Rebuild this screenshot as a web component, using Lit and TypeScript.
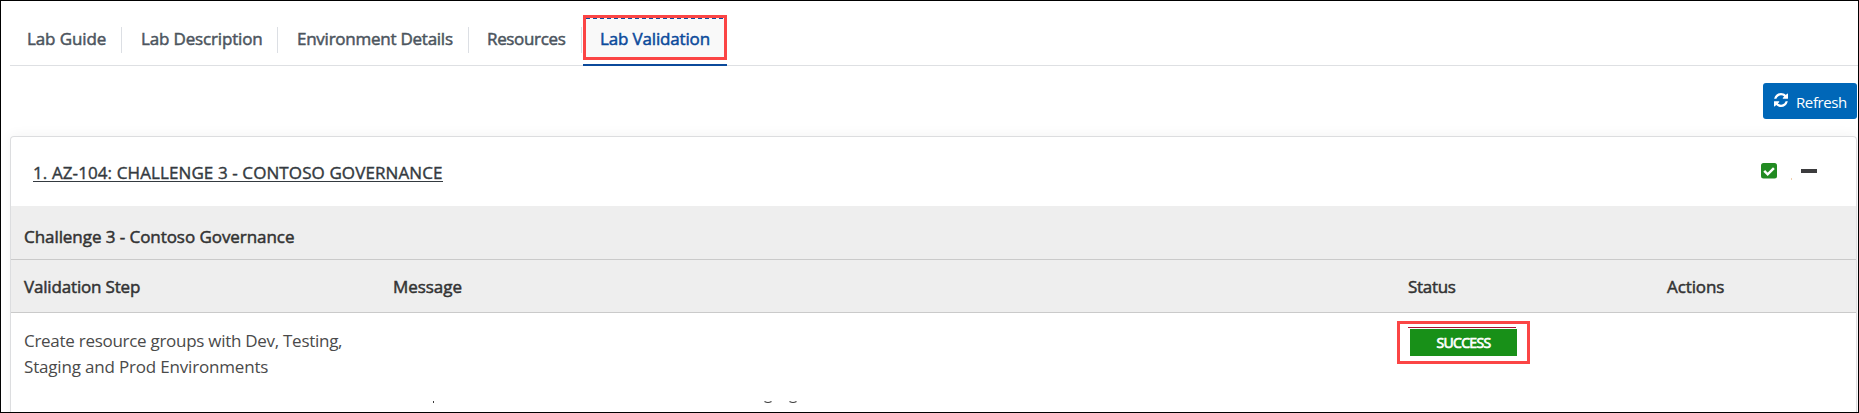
import { LitElement, html, css } from "lit";
import { customElement } from "lit/decorators.js";

@customElement("app-root")
class AppRoot extends LitElement {
  static styles = css`
    :host { display: block; height: 413px; font-family: "Open Sans", "Noto Sans", sans-serif; font-size: 17px; color: #333; }
    * { box-sizing: border-box; }
    .frame { height: 413px; border: 1px solid #000; background: #fff; padding: 13px 0 0 9px; overflow: hidden; }
    .tabs { display: flex; height: 52px; border-bottom: 1px solid #dee0e3; color: #4c555e; -webkit-text-stroke: 0.5px currentColor; }
    .tab { display: flex; height: 26px; margin-top: 13px; line-height: 23px; border-right: 1px solid #dcdfe4; white-space: nowrap; }
    .guide { width: 112px; padding-left: 17px; letter-spacing: -0.1px; }
    .desc { width: 156px; padding-left: 19px; letter-spacing: -0.16px; }
    .env { width: 191px; padding-left: 19px; letter-spacing: -0.25px; }
    .res { width: 113px; padding-left: 18px; letter-spacing: -0.35px; }
    .active { position: relative; width: 144px; height: 52px; margin: 0 0 0 1px; padding: 13px 0 0 17px; border: 0; border-bottom: 2px solid #0b4a9b; color: #0b4a9b; letter-spacing: -0.16px; }
    .mark { border: 3px solid #fb4545; }
    .active .mark { position: absolute; left: 0; top: 1px; width: 144px; height: 45px; z-index: 0; background: repeating-linear-gradient(90deg, #0b4a9b 0 4px, transparent 4px 7px) 0 0 / 100% 1px no-repeat, #f9f9f9; }
    .label { position: relative; z-index: 1; }
    .toolbar { display: flex; justify-content: flex-end; height: 70px; padding: 17px 1px 0 0; }
    .refresh { display: flex; align-items: center; width: 94px; height: 36px; padding: 0 0 0 11px; border: 0; border-radius: 3px; background: #0067b8; color: #fff; font: 400 15px/20px "Open Sans", "Noto Sans", sans-serif; letter-spacing: -0.4px; }
    .refresh svg { width: 14px; height: 14px; margin: -2px 8px 0 0; }
    .refresh span { padding-top: 1px; }
    .card { width: 1847px; height: 290px; border: 1px solid #dcdddf; border-bottom: 0; border-radius: 4px 4px 0 0; box-shadow: 0 -2px 12px rgba(0,0,0,.045); }
    .head { display: flex; height: 69px; padding-left: 22px; color: #343a40; }
    .title { width: 1728px; padding-top: 24px; line-height: 24px; letter-spacing: 0.1px; -webkit-text-stroke: 0.4px currentColor; }
    .title span { border-bottom: 1px solid #343a40; display: inline-block; height: 21px; }
    .check { width: 16px; height: 16px; margin-top: 26px; }
    .speck { width: 1px; height: 2px; margin: 41px 9px 0 14px; background: #f2cfae; }
    .minus { width: 16px; height: 4px; margin-top: 32px; background: #3c3c3e; }
    .bar { background: #eee; border-bottom: 1px solid #cacaca; -webkit-text-stroke: 0.5px currentColor; }
    .group { height: 54px; padding: 19px 0 0 13px; line-height: 24px; letter-spacing: -0.06px; }
    .row { display: grid; grid-template-columns: 369px 1015px 259px 1fr; padding-left: 13px; }
    .cols { height: 53px; padding-top: 15px; line-height: 24px; }
    .c1 { letter-spacing: -0.17px; } .c2 { letter-spacing: -0.05px; } .c3 { letter-spacing: -0.3px; } .c4 { letter-spacing: -0.1px; }
    .step { padding-top: 15px; line-height: 26px; white-space: nowrap; color: #4a4a4a; }
    .l1 { letter-spacing: -0.28px; } .l2 { letter-spacing: -0.18px; }
    .message { padding: 88px 0 0 38px; }
    .message svg { display: block; width: 370px; height: 4px; }
    .status { width: 133px; height: 43px; margin: 8px 0 0 -11px; padding: 3px 0 0 8px; }
    .rule { width: 108px; height: 1px; background: #ae1231; }
    .badge { width: 107px; height: 27px; margin: 1px 0 0 2px; background: #189018; color: #fff; font-size: 14px; line-height: 28px; text-align: center; letter-spacing: -0.7px; -webkit-text-stroke: 0.7px currentColor; }
  `;

  render() {
    return html`<div class="frame">
      <nav class="tabs">
        <div class="tab guide">Lab Guide</div>
        <div class="tab desc">Lab Description</div>
        <div class="tab env">Environment Details</div>
        <div class="tab res">Resources</div>
        <div class="tab active"><div class="mark"></div><span class="label">Lab Validation</span></div>
      </nav>
      <div class="toolbar">
        <button class="refresh">
          <svg viewBox="0 0 1536 1536" fill="#fff"><path d="M1511 928q0 5-1 7-64 268-268 434.500T764 1536q-146 0-282.500-55T238 1324l-129 129q-19 19-45 19t-45-19-19-45V960q0-26 19-45t45-19h448q26 0 45 19t19 45-19 45l-137 137q71 66 161 102t187 36q134 0 250-65t186-179q11-17 53-117 8-23 30-23h192q13 0 22.500 9.500t9.500 22.500zm25-800v448q0 26-19 45t-45 19h-448q-26 0-45-19t-19-45 19-45l138-138Q969 256 768 256q-134 0-250 65T332 500q-11 17-53 117-8 23-30 23H50q-13 0-22.500-9.500T18 608v-7q65-268 270-434.500T768 0q146 0 284 55.500T1297 212l130-129q19-19 45-19t45 19 19 45z"/></svg>
          <span>Refresh</span>
        </button>
      </div>
      <section class="card">
        <div class="head">
          <div class="title"><span>1. AZ-104: CHALLENGE 3 - CONTOSO GOVERNANCE</span></div>
          <svg class="check" viewBox="0 0 16 16"><rect width="16" height="15.500" rx="2.500" fill="#228b22"/><path d="M3.200 7.800l3.500 3.500 6.200-6.200" fill="none" stroke="#fff" stroke-width="2.500"/></svg>
          <div class="speck"></div>
          <div class="minus"></div>
        </div>
        <div class="bar group">Challenge 3 - Contoso Governance</div>
        <div class="bar row cols"><div class="c1">Validation Step</div><div class="c2">Message</div><div class="c3">Status</div><div class="c4">Actions</div></div>
        <div class="row">
          <div class="step"><div class="l1">Create resource groups with Dev, Testing,</div><div class="l2">Staging and Prod Environments</div></div>
          <div class="message"><svg viewBox="0 0 370 4" fill="none" stroke="#3c3c3c"><path d="M2.500 0v2"/><path stroke-width="1.200" d="M333.500 .5q3.500 2 7 0M358.500 .5q3.500 2 7 0"/></svg></div>
          <div class="mark status"><div class="rule"></div><div class="badge">SUCCESS</div></div>
          <div></div>
        </div>
      </section>
    </div>`;
  }
}
